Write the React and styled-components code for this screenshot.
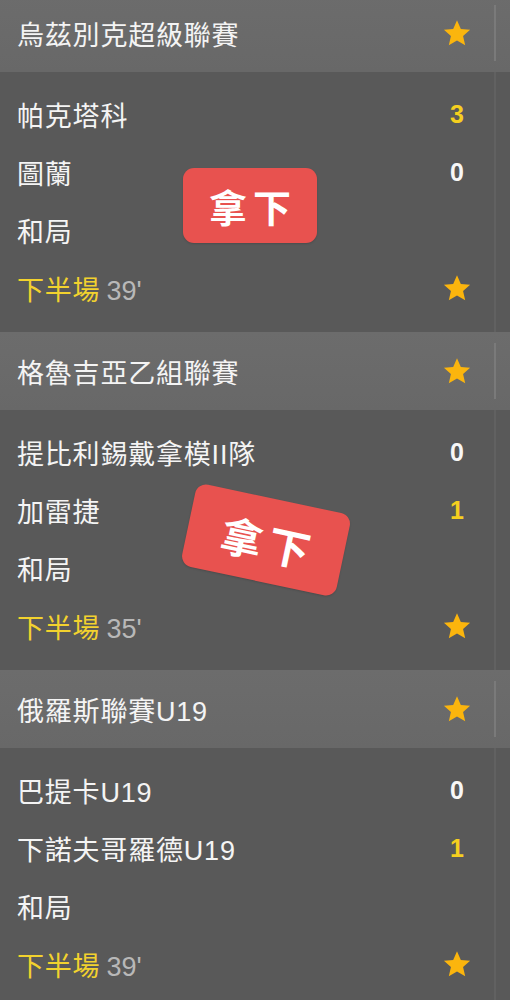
import React from 'react';
import styled, { createGlobalStyle } from 'styled-components';

const GlobalStyle = createGlobalStyle`
  html, body {
    margin: 0;
    padding: 0;
    background: #595959;
  }
  body {
    font-family: "Liberation Sans", "Noto Sans CJK TC", sans-serif;
    -webkit-font-smoothing: antialiased;
  }
`;

const leagues = [
  {
    name: '烏茲別克超級聯賽',
    home: { name: '帕克塔科', score: 3, lead: true },
    away: { name: '圖蘭', score: 0, lead: false },
    minute: "39'",
    stamp: { left: 183, top: 96, width: 134, height: 75, size: 38, rotate: 0 },
  },
  {
    name: '格魯吉亞乙組聯賽',
    home: { name: '提比利錫戴拿模II隊', score: 0, lead: false },
    away: { name: '加雷捷', score: 1, lead: true },
    minute: "35'",
    stamp: { left: 187, top: 88, width: 158, height: 84, size: 42, rotate: 12 },
  },
  {
    name: '俄羅斯聯賽U19',
    home: { name: '巴提卡U19', score: 0, lead: false },
    away: { name: '下諾夫哥羅德U19', score: 1, lead: true },
    minute: "39'",
  },
];

const StarIcon = () => (
  <svg width="30" height="30" viewBox="0 0 24 24">
    <path
      d="M12 1.8l3.05 6.9 7.45.7-5.65 4.95 1.7 7.35L12 17.9l-6.55 3.8 1.7-7.35L1.5 9.4l7.45-.7z"
      fill="#fbb50d"
    />
  </svg>
);

const Page = styled.div`
  width: 510px;
  height: 1000px;
  overflow: hidden;
  background: #595959;
`;

const Shift = styled.div`
  margin-top: -6px;
`;

const Header = styled.div`
  height: 78px;
  display: flex;
  align-items: center;
  background: linear-gradient(#6c6c6c, #686868);
`;

const Title = styled.div`
  flex: 1;
  padding-left: 17px;
  font-size: 27px;
  letter-spacing: 0.8px;
  color: #f4f4f4;
`;

const Cell = styled.div`
  width: 40px;
  display: flex;
  justify-content: center;
  align-items: center;
`;

const Rail = styled.div`
  width: 33px;
  align-self: stretch;
  display: flex;
  align-items: center;
  padding-left: 17px;
  box-sizing: border-box;
`;

const Tick = styled.div`
  width: 2px;
  height: ${(p) => (p.$full ? '100%' : '56px')};
  background: ${(p) => (p.$full ? '#616161' : '#7a7a7a')};
`;

const Body = styled.div`
  position: relative;
  display: flex;
  background: #595959;
`;

const Rows = styled.div`
  flex: 1;
  padding: 13px 0 15px;
`;

const Row = styled.div`
  height: 58px;
  display: flex;
  align-items: center;
`;

const Name = styled.div`
  flex: 1;
  padding-left: 17px;
  font-size: 27px;
  letter-spacing: 0.8px;
  color: #f4f4f4;
`;

const Score = styled.div`
  font-size: 25px;
  font-weight: 700;
  color: ${(p) => (p.$lead ? '#f5cf1f' : '#f7f7f7')};
`;

const Status = styled.span`
  color: #f2d22e;
`;

const Minute = styled.span`
  color: #b8b8b8;
  margin-left: 6px;
  letter-spacing: 0;
`;

const Stamp = styled.div`
  position: absolute;
  display: flex;
  align-items: center;
  justify-content: center;
  background: #e8524f;
  border-radius: 11px;
  color: #ffffff;
  font-weight: 700;
  letter-spacing: 6px;
  padding-left: 6px;
  box-sizing: border-box;
  box-shadow: 0 1px 2px rgba(0, 0, 0, 0.15);
`;

const League = ({ league }) => (
  <>
    <Header>
      <Title>{league.name}</Title>
      <Cell>
        <StarIcon />
      </Cell>
      <Rail>
        <Tick />
      </Rail>
    </Header>
    <Body>
      <Rows>
        {[league.home, league.away].map((team) => (
          <Row key={team.name}>
            <Name>{team.name}</Name>
            <Cell>
              <Score $lead={team.lead}>{team.score}</Score>
            </Cell>
          </Row>
        ))}
        <Row>
          <Name>和局</Name>
          <Cell />
        </Row>
        <Row>
          <Name>
            <Status>下半場</Status>
            <Minute>{league.minute}</Minute>
          </Name>
          <Cell>
            <StarIcon />
          </Cell>
        </Row>
      </Rows>
      <Rail>
        <Tick $full />
      </Rail>
      {league.stamp && (
        <Stamp
          style={{
            left: league.stamp.left,
            top: league.stamp.top,
            width: league.stamp.width,
            height: league.stamp.height,
            fontSize: league.stamp.size,
            transform: `rotate(${league.stamp.rotate}deg)`,
          }}
        >
          拿下
        </Stamp>
      )}
    </Body>
  </>
);

export default function App() {
  return (
    <Page>
      <GlobalStyle />
      <Shift>
        {leagues.map((league) => (
          <League key={league.name} league={league} />
        ))}
      </Shift>
    </Page>
  );
}
